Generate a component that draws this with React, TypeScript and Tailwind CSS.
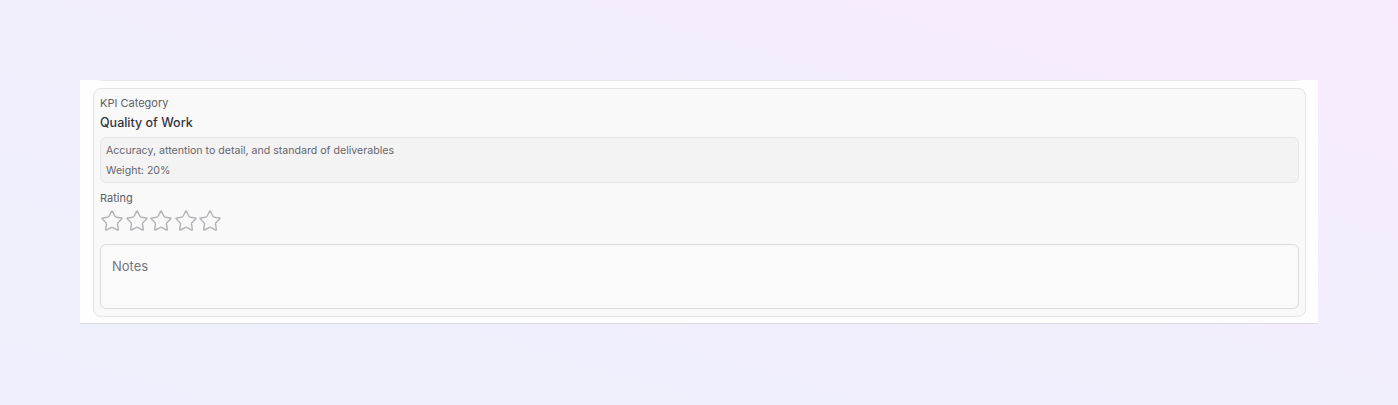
import React, { useState } from 'react';
import { Star } from 'lucide-react';

export default function App() {
  const [rating, setRating] = useState(0);
  const [notes, setNotes] = useState('');

  return (
    <div
      className="min-h-[405px] w-full bg-gradient-to-tr from-[#eff0fd] via-[#f2effd] to-[#f7eafd] pt-[80px] pb-[81px]"
      style={{ fontFamily: 'Inter, "Noto Sans", sans-serif' }}
    >
      <div className="mx-[80px] h-[244px] overflow-hidden bg-[#fefefe] border-b border-[#dedde3] pl-[13px] pr-[12px]">
        {/* bottom of the previous card, scrolled out of view */}
        <div className="-mt-[12px] mx-[2px] h-[13px] rounded-lg border border-[#e8e8e8] bg-[#f9f9f9]" />

        <div className="mt-[7px] rounded-lg border border-[#e4e4e4] bg-[#f9f9f9] px-[6px] pt-[6px] pb-[7px]">
          <p className="text-[11px] leading-[16px] text-[#5f5f66]">KPI Category</p>
          <h3 className="mt-[3px] text-[12.5px] leading-[18px] font-medium text-[#34343f]">Quality of Work</h3>

          <div className="mt-[5px] rounded-md border border-[#e6e6e6] bg-[#f3f3f3] px-[5px] pt-[4px] pb-[2px]">
            <p className="text-[10.6px] leading-[18px] text-[#66666e]">
              Accuracy, attention to detail, and standard of deliverables
            </p>
            <p className="mt-[2px] text-[10.6px] leading-[18px] text-[#66666e]">Weight: 20%</p>
          </div>

          <p className="mt-[7px] text-[11px] leading-[16px] text-[#5f5f66]">Rating</p>
          <div className="mt-[3px] flex items-center gap-[0.5px]">
            {[1, 2, 3, 4, 5].map((n) => (
              <button key={n} type="button" onClick={() => setRating(n)} className="p-0">
                <Star
                  size={24}
                  strokeWidth={1.5}
                  className={n <= rating ? 'fill-amber-400 text-amber-400' : 'text-[#b6b6ba]'}
                />
              </button>
            ))}
          </div>

          <textarea
            value={notes}
            onChange={(e) => setNotes(e.target.value)}
            placeholder="Notes"
            className="mt-[11px] block h-[65px] w-full resize-none rounded-md border border-[#dcdcdc] bg-[#fafafa] px-[11px] py-[12px] text-[13px] leading-[18px] text-[#333] placeholder:text-[#75757d] outline-none"
          />
        </div>
      </div>
    </div>
  );
}
